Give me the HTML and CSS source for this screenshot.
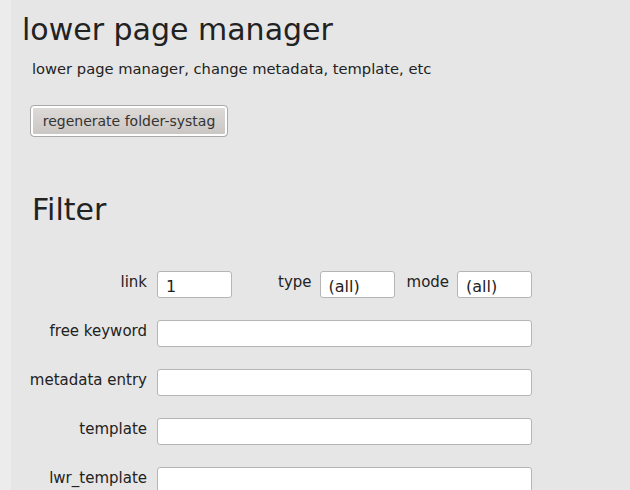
FILE: index.html
```html
<!DOCTYPE html>
<html lang="en">
<head>
    <meta charset="UTF-8">
    <meta name="viewport" content="width=device-width, initial-scale=1.0">
    <title>lower page manager</title>
    <link rel="stylesheet" href="styles.css">
</head>
<body>
    <div class="page">
        <h1 class="title">lower page manager</h1>
        <p class="desc">lower page manager, change metadata, template, etc</p>

        <div class="actions">
            <button class="btn">regenerate folder-systag</button>
        </div>

        <h2 class="section">Filter</h2>

        <form class="filter">
            <div class="row">
                <label class="lbl">link</label>
                <div class="inline">
                    <input class="field small" type="text" value="1">
                    <label class="lbl-inline type">type</label>
                    <input class="field small" type="text" value="(all)">
                    <label class="lbl-inline mode">mode</label>
                    <input class="field small" type="text" value="(all)">
                </div>
            </div>
            <div class="row">
                <label class="lbl">free keyword</label>
                <input class="field wide" type="text">
            </div>
            <div class="row">
                <label class="lbl">metadata entry</label>
                <input class="field wide" type="text">
            </div>
            <div class="row">
                <label class="lbl">template</label>
                <input class="field wide" type="text">
            </div>
            <div class="row">
                <label class="lbl">lwr_template</label>
                <input class="field wide" type="text">
            </div>
        </form>
    </div>
</body>
</html>
```

FILE: styles.css
```css
body {
    font-family: "DejaVu Sans", Verdana, sans-serif;
    margin: 0;
    padding: 0;
    background-color: #ececec;
    color: #222;
}

.page {
    margin-left: 11px;
    min-height: 490px;
    background-color: #e6e6e6;
    padding: 12px 0 0 11px;
}

.title {
    font-size: 30px;
    font-weight: normal;
    margin: 0;
    line-height: 36px;
}

.desc {
    font-size: 14.7px;
    margin: 12px 0 0 10px;
}

.actions {
    margin: 28px 0 0 8px;
}

.btn {
    font-family: "DejaVu Sans", Verdana, sans-serif;
    font-size: 14px;
    color: #333;
    width: 198px;
    height: 32px;
    border: 1px solid #a9a9a9;
    border-radius: 4px;
    box-shadow: inset 0 0 0 2px #fff;
    background: linear-gradient(#dedbd9, #c9c5c3);
    padding: 0;
}

.section {
    font-size: 30px;
    font-weight: normal;
    margin: 55px 0 0 10px;
    line-height: 36px;
}

.filter {
    margin: 43px 0 0 10px;
    display: flex;
    flex-direction: column;
    gap: 22px;
}

.row {
    display: flex;
    align-items: flex-start;
    gap: 10px;
}

.lbl {
    flex: 0 0 115px;
    min-width: 0;
    display: flex;
    justify-content: flex-end;
    white-space: nowrap;
    font-size: 15px;
    padding-top: 2px;
}

.inline {
    display: flex;
    align-items: flex-start;
    gap: 8px;
}

.lbl-inline {
    font-size: 15px;
    padding-top: 2px;
}

.lbl-inline.type {
    margin-left: 38px;
}

.lbl-inline.mode {
    margin-left: 4px;
}

.field {
    box-sizing: border-box;
    height: 27px;
    border: 1px solid #b5b5b5;
    border-radius: 3px;
    background: #fff;
    font-family: "DejaVu Sans", Verdana, sans-serif;
    font-size: 16px;
    color: #222;
    padding: 3px 8px 0;
}

.field.small {
    width: 75px;
}

.field.wide {
    width: 375px;
}
```
